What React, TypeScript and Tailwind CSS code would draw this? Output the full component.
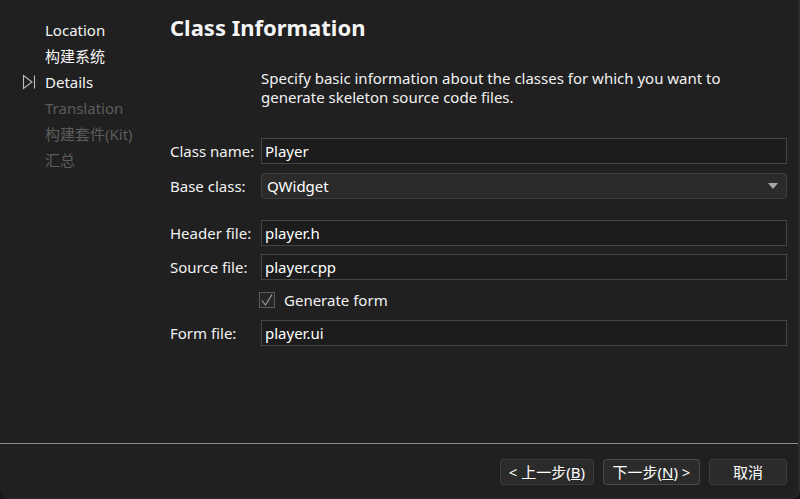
import React from "react";

const font = {
  fontFamily: '"Noto Sans", "Noto Sans CJK SC", sans-serif',
};

const steps = [
  { label: "Location", state: "done" },
  { label: "构建系统", state: "done" },
  { label: "Details", state: "current" },
  { label: "Translation", state: "todo" },
  { label: "构建套件(Kit)", state: "todo" },
  { label: "汇总", state: "todo" },
];

const StepArrow = () => (
  <svg width="16" height="16" viewBox="0 0 16 16" className="shrink-0">
    <path d="M2.5 1.5 L11 8 L2.5 14.5 Z" fill="none" stroke="#bdbdbd" strokeWidth="1.1" />
    <path d="M13.5 1.5 V14.5" stroke="#bdbdbd" strokeWidth="1.1" />
  </svg>
);

const Field = ({ label, value }: { label: string; value: string }) => (
  <div className="flex h-[26px] items-center">
    <div className="w-[91px] shrink-0 text-[15px] text-[#f2f2f2]">{label}</div>
    <div className="flex h-[26px] flex-1 items-center border border-[#454545] bg-[#1c1c1c] px-[3px] text-[15px] text-white">
      {value}
    </div>
  </div>
);

const Button = ({ children, primary }: { children: React.ReactNode; primary?: boolean }) => (
  <button
    className={
      "flex h-[26px] w-full items-center justify-center rounded-[3px] border bg-[#2b2b2b] text-[15px] text-white " +
      (primary ? "border-[#4a4a4a]" : "border-[#3c3c3c]")
    }
  >
    {children}
  </button>
);

export default function App() {
  return (
    <div className="h-[499px] w-[800px] overflow-hidden bg-[#151515]" style={font}>
      <div className="flex h-[499px] w-[800px] flex-col rounded-b-[9px] border-r-2 border-b border-[#2c2c2c] bg-[#202020]">
        <div className="flex flex-1">
          {/* steps */}
          <div className="flex w-[170px] shrink-0 flex-col pt-[17px]">
            {steps.map((s) => (
              <div key={s.label} className="flex h-[26px] items-center">
                <div className="flex w-[45px] justify-end pr-[8px]">
                  {s.state === "current" && <StepArrow />}
                </div>
                <span
                  className={
                    "text-[15px] " + (s.state === "todo" ? "text-[#5c5c5c]" : "text-[#f5f5f5]")
                  }
                >
                  {s.label}
                </span>
              </div>
            ))}
          </div>

          {/* page */}
          <div className="flex flex-1 flex-col pr-[11px]">
            <h1 className="mt-[11px] text-[22px] leading-[32px] font-bold text-[#f5f5f5]">
              Class Information
            </h1>
            <p className="mt-[26px] pl-[91px] text-[15px] leading-[19px] text-[#f2f2f2]">
              Specify basic information about the classes for which you want to
              <br />
              generate skeleton source code files.
            </p>

            <div className="mt-[31px] flex flex-col">
              <Field label="Class name:" value="Player" />
              <div className="mt-[9px] flex h-[26px] items-center">
                <div className="w-[91px] shrink-0 text-[15px] text-[#f2f2f2]">Base class:</div>
                <div className="flex h-[26px] flex-1 items-center justify-between rounded-[3px] border border-[#3d3d3d] bg-[#2b2b2b] pl-[5px] pr-[8px] text-[15px] text-white">
                  <span>QWidget</span>
                  <svg width="10" height="6" viewBox="0 0 10 6">
                    <path d="M0 0 H10 L5 6 Z" fill="#a8a8a8" />
                  </svg>
                </div>
              </div>

              <div className="mt-[21px]">
                <Field label="Header file:" value="player.h" />
              </div>
              <div className="mt-[8px]">
                <Field label="Source file:" value="player.cpp" />
              </div>
              <div className="mt-[7px] flex h-[26px] items-center pl-[89px]">
                <div className="flex h-[16px] w-[16px] items-center justify-center border border-[#5a5a5a] bg-[#262626]">
                  <svg width="14" height="14" viewBox="0 0 14 14">
                    <path d="M2 7.5 L5.5 12 L12 1.5" fill="none" stroke="#9a9a9a" strokeWidth="1.2" />
                  </svg>
                </div>
                <span className="ml-[9px] text-[15px] text-[#f2f2f2]">Generate form</span>
              </div>
              <div className="mt-[7px]">
                <Field label="Form file:" value="player.ui" />
              </div>
            </div>
          </div>
        </div>

        {/* footer */}
        <div className="h-px w-full bg-[#8c8c8c]" />
        <div className="flex h-[54px] items-start justify-end gap-[9px] pt-[15px] pr-[11px]">
          <div className="w-[94px]">
            <Button>
              <span>
                &lt; 上一步(<span className="underline">B</span>)
              </span>
            </Button>
          </div>
          <div className="w-[97px]">
            <Button primary>
              <span>
                下一步(<span className="underline">N</span>) &gt;
              </span>
            </Button>
          </div>
          <div className="w-[78px]">
            <Button>
              <span>取消</span>
            </Button>
          </div>
        </div>
      </div>
    </div>
  );
}
